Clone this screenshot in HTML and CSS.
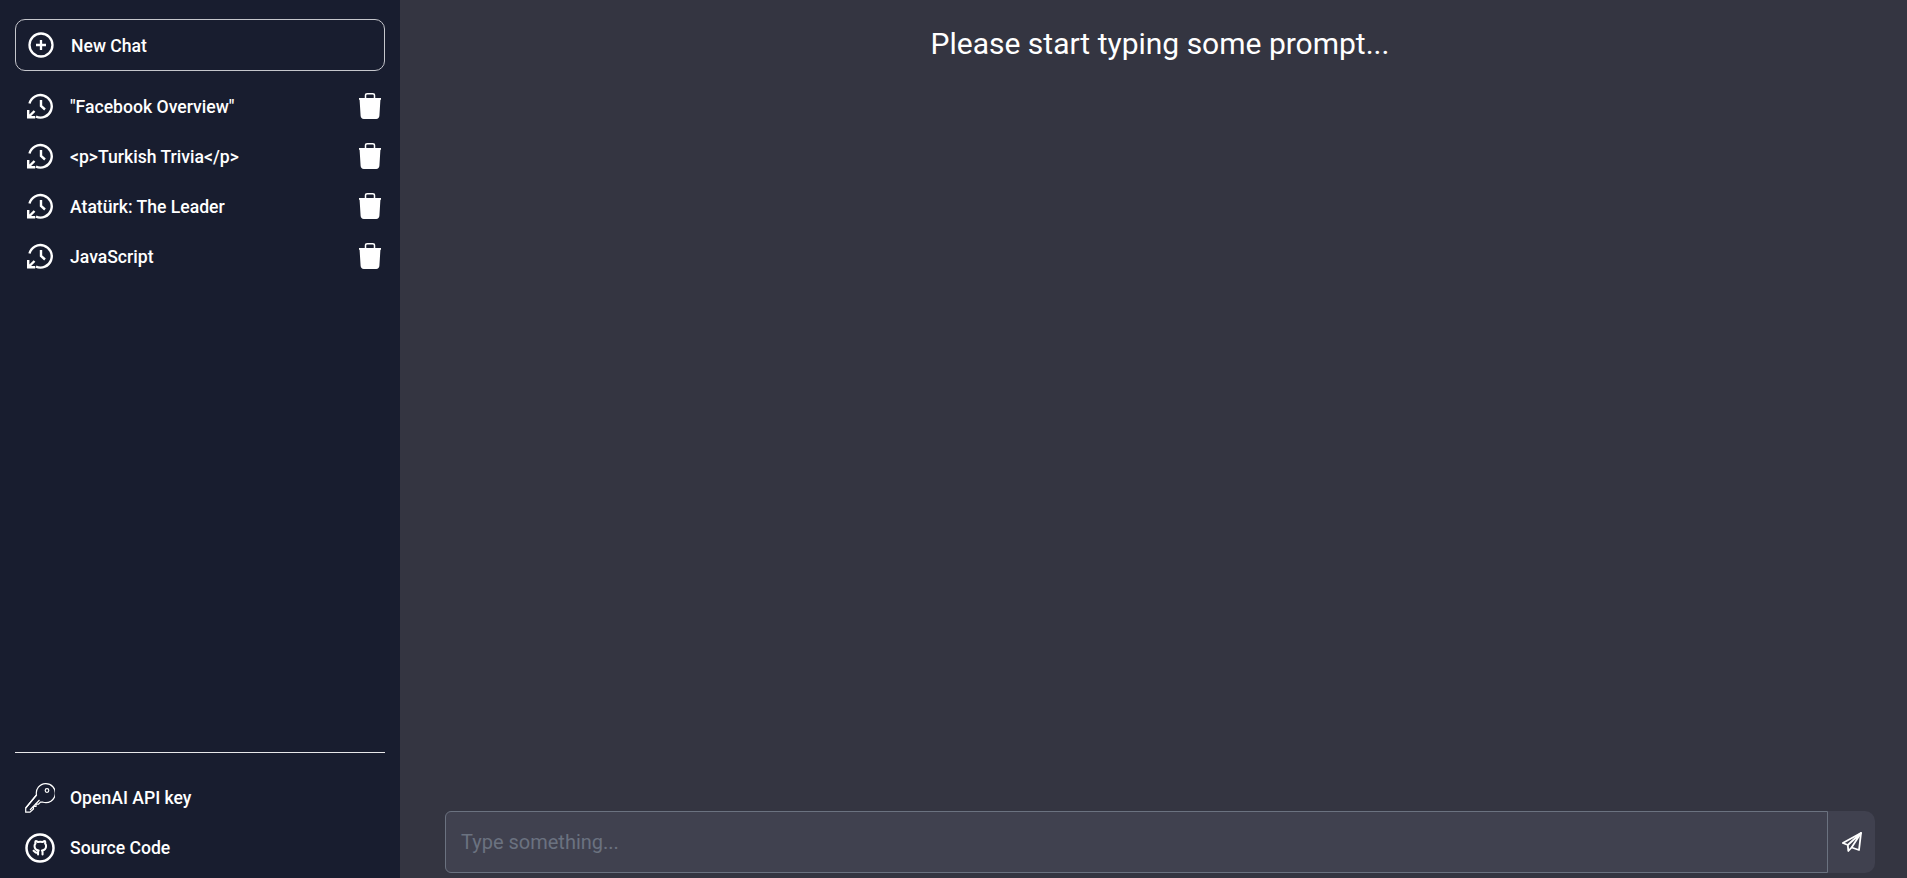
FILE: index.html
```html
<!DOCTYPE html>
<html lang="en">
<head>
    <meta charset="UTF-8">
    <meta name="viewport" content="width=device-width, initial-scale=1.0">
    <title>Chat</title>
    <link rel="stylesheet" href="styles.css">
</head>
<body>
    <aside class="sidebar">
        <button class="new-chat">
            <svg class="icon-plus" width="26" height="26" viewBox="0 0 26 26" fill="none" stroke="#fff" stroke-width="2.300"><circle cx="13" cy="13" r="11.500"/><path d="M13 8v10M8 13h10"/></svg>
            <span class="row-label">New Chat</span>
        </button>

        <ul class="history">
            <li class="history-row">
                <svg class="icon-history" width="26" height="26" viewBox="0 0 26 26" fill="none" stroke="#fff" stroke-width="2.400"><path d="M2.500 10.500A11.300 11.300 0 1 1 9 23.700"/><path d="M1.200 17v7.200h7M2 23.500L7.500 18"/><path d="M14 7v6l4 3.500"/></svg>
                <span class="row-label history-title">"Facebook Overview"</span>
                <svg class="icon-trash" width="22" height="26" viewBox="0 0 22 26"><path d="M6.500 5V2.500C6.500 1.300 7.300.8 8.300.8h5.400c1 0 1.800.5 1.800 1.700V5" fill="none" stroke="#fff" stroke-width="1.500"/><path d="M0 5h22v1.800h-.6l-1 16c-.1 2-1.300 3.200-3.200 3.200H4.800c-1.900 0-3.100-1.200-3.200-3.200L.6 6.800H0z" fill="#fff"/></svg>
            </li>
            <li class="history-row">
                <svg class="icon-history" width="26" height="26" viewBox="0 0 26 26" fill="none" stroke="#fff" stroke-width="2.400"><path d="M2.500 10.500A11.300 11.300 0 1 1 9 23.700"/><path d="M1.200 17v7.200h7M2 23.500L7.500 18"/><path d="M14 7v6l4 3.500"/></svg>
                <span class="row-label history-title">&lt;p&gt;Turkish Trivia&lt;/p&gt;</span>
                <svg class="icon-trash" width="22" height="26" viewBox="0 0 22 26"><path d="M6.500 5V2.500C6.500 1.300 7.300.8 8.300.8h5.400c1 0 1.800.5 1.800 1.700V5" fill="none" stroke="#fff" stroke-width="1.500"/><path d="M0 5h22v1.800h-.6l-1 16c-.1 2-1.300 3.200-3.200 3.200H4.800c-1.900 0-3.100-1.200-3.200-3.200L.6 6.800H0z" fill="#fff"/></svg>
            </li>
            <li class="history-row">
                <svg class="icon-history" width="26" height="26" viewBox="0 0 26 26" fill="none" stroke="#fff" stroke-width="2.400"><path d="M2.500 10.500A11.300 11.300 0 1 1 9 23.700"/><path d="M1.200 17v7.200h7M2 23.500L7.500 18"/><path d="M14 7v6l4 3.500"/></svg>
                <span class="row-label history-title">Atatürk: The Leader</span>
                <svg class="icon-trash" width="22" height="26" viewBox="0 0 22 26"><path d="M6.500 5V2.500C6.500 1.300 7.300.8 8.300.8h5.400c1 0 1.800.5 1.800 1.700V5" fill="none" stroke="#fff" stroke-width="1.500"/><path d="M0 5h22v1.800h-.6l-1 16c-.1 2-1.300 3.200-3.200 3.200H4.800c-1.900 0-3.100-1.200-3.200-3.200L.6 6.800H0z" fill="#fff"/></svg>
            </li>
            <li class="history-row">
                <svg class="icon-history" width="26" height="26" viewBox="0 0 26 26" fill="none" stroke="#fff" stroke-width="2.400"><path d="M2.500 10.500A11.300 11.300 0 1 1 9 23.700"/><path d="M1.200 17v7.200h7M2 23.500L7.500 18"/><path d="M14 7v6l4 3.500"/></svg>
                <span class="row-label history-title">JavaScript</span>
                <svg class="icon-trash" width="22" height="26" viewBox="0 0 22 26"><path d="M6.500 5V2.500C6.500 1.300 7.300.8 8.300.8h5.400c1 0 1.800.5 1.800 1.700V5" fill="none" stroke="#fff" stroke-width="1.500"/><path d="M0 5h22v1.800h-.6l-1 16c-.1 2-1.300 3.200-3.200 3.200H4.800c-1.900 0-3.100-1.200-3.200-3.200L.6 6.800H0z" fill="#fff"/></svg>
            </li>
        </ul>

        <div class="sidebar-footer">
            <div class="footer-row">
                <svg class="icon-key" width="30" height="30" viewBox="0 0 30 30" fill="none" stroke="#fff" stroke-width="1.200"><path d="M11.500 12A9.500 9.500 0 1 1 18 19.200L15.500 19 13.500 21.200 11 21.200 11 23.500 8.500 23.500 8.500 26 5 29.200H.7V25z"/><path d="M11.500 12L.7 25M14.500 17L5 27"/><circle cx="22" cy="7.500" r="1.800"/></svg>
                <span class="footer-label">OpenAI API key</span>
            </div>
            <div class="footer-row">
                <svg class="icon-github" width="30" height="30" viewBox="0 0 30 30" fill="none" stroke="#fff"><circle cx="15" cy="15" r="13.500" stroke-width="2.500"/><path transform="translate(7.300 7.500) scale(.64)" stroke-width="3.200" stroke-linecap="round" stroke-linejoin="round" d="M9 19c-5 1.500-5-2.500-7-3m14 6v-3.870a3.370 3.370 0 0 0-.94-2.610c3.140-.35 6.440-1.540 6.440-7A5.440 5.440 0 0 0 20 4.770 5.070 5.070 0 0 0 19.910 1S18.730.65 16 2.480a13.380 13.380 0 0 0-7 0C6.270.65 5.090 1 5.090 1A5.070 5.070 0 0 0 5 4.770a5.440 5.440 0 0 0-1.500 3.750c0 5.420 3.300 6.610 6.440 7A3.370 3.370 0 0 0 9 18.130V22"/></svg>
                <span class="footer-label">Source Code</span>
            </div>
        </div>
    </aside>

    <main class="main">
        <h1 class="prompt-title">Please start typing some prompt...</h1>
        <form class="chat-form">
            <input class="chat-input" type="text" placeholder="Type something...">
            <button class="send-btn" type="button">
                <svg width="20" height="20" viewBox="0 0 20 20" fill="none" stroke="#fff" stroke-width="1.800" stroke-linejoin="round"><path d="M19 1L.8 11l5 2 .5 6 3.300-3.500 7.400 2.500z"/><path d="M5.800 13L19 1 9.600 15.500"/></svg>
            </button>
        </form>
    </main>
</body>
</html>
```

FILE: styles.css
```css
* {
    margin: 0;
    padding: 0;
    box-sizing: border-box;
}

body {
    font-family: 'Roboto', 'Liberation Sans', sans-serif;
    background: #343541;
    height: 100vh;
    display: flex;
    overflow: hidden;
    color: white;
}

.sidebar {
    width: 400px;
    flex-shrink: 0;
    background: #181d2f;
    padding: 19px 15px 5px;
    display: flex;
    flex-direction: column;
}

.new-chat {
    height: 52px;
    background: transparent;
    border: 1px solid #c5c6cc;
    border-radius: 10px;
    color: white;
    font: inherit;
    font-size: 17.6px;
    font-weight: 500;
    display: flex;
    align-items: center;
    gap: 17px;
    padding-left: 12px;
    text-align: left;
}

.row-label {
    padding-top: 2px;
}

.history {
    list-style: none;
    margin-top: 10px;
    flex: 1;
}

.history-row {
    height: 50px;
    display: flex;
    align-items: center;
    padding-left: 12px;
    font-size: 17.6px;
    font-weight: 500;
}

.icon-history {
    flex-shrink: 0;
    margin-right: 17px;
}

.history-title {
    flex: 1;
}

.icon-trash {
    flex-shrink: 0;
    margin-right: 4px;
}

.sidebar-footer {
    border-top: 1px solid #e8e8ea;
    padding-top: 20px;
}

.footer-row {
    height: 50px;
    display: flex;
    align-items: center;
    gap: 15px;
    padding-left: 10px;
    font-size: 17.6px;
    font-weight: 500;
}

.main {
    flex: 1;
    display: flex;
    flex-direction: column;
    padding: 0 32px 5px 45px;
}

.prompt-title {
    flex: 1;
    text-align: center;
    font-size: 30px;
    font-weight: 400;
    line-height: 36px;
    padding-top: 26px;
}

.chat-form {
    display: flex;
    height: 62px;
}

.chat-input {
    flex: 1;
    background: #40414f;
    border: 1px solid #6b7280;
    border-radius: 6px 0 0 6px;
    padding: 0 15px;
    font: inherit;
    font-size: 20px;
    color: white;
    outline: none;
}

.chat-input::placeholder {
    color: #6b7280;
}

.send-btn {
    width: 47px;
    background: #40414f;
    border: none;
    border-radius: 0 10px 10px 0;
    display: flex;
    align-items: center;
    justify-content: center;
}
```
